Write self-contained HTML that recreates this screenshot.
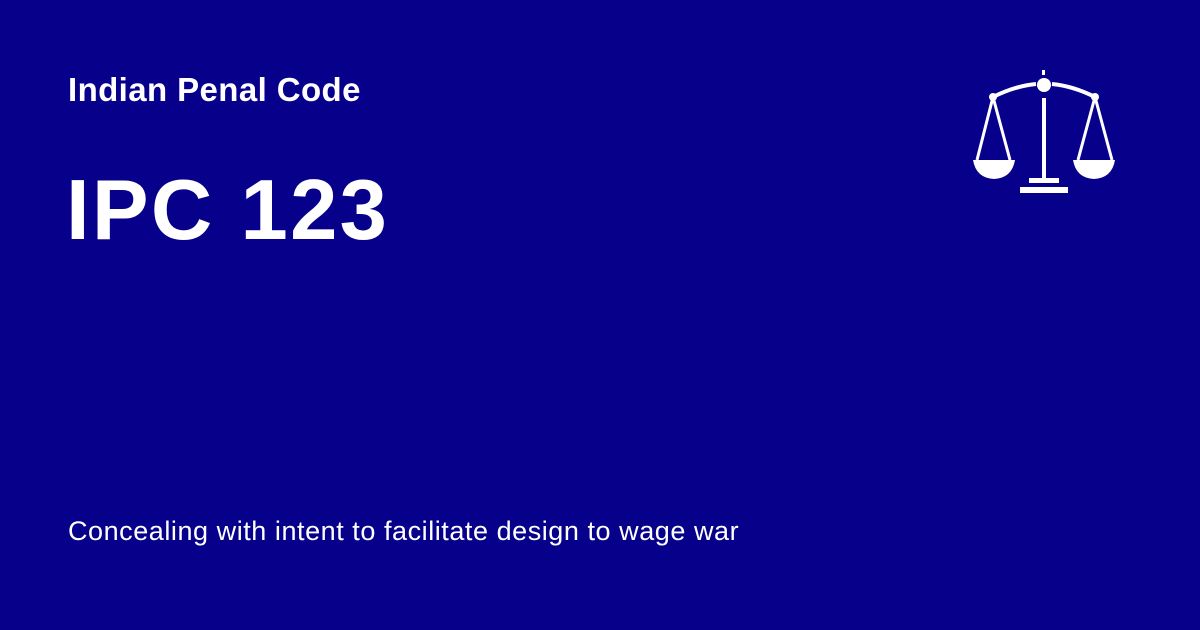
<!DOCTYPE html>
<html><head><style>
body{margin:0;width:1200px;height:630px;background:#07008a;overflow:hidden;font-family:"Liberation Sans",Arial,sans-serif;color:#fff;position:relative}
.t1{position:absolute;left:68px;top:70px;font-size:33px;font-weight:bold;line-height:40px;letter-spacing:0.4px}
.t2{position:absolute;left:66px;top:156px;font-size:85px;font-weight:bold;line-height:110px;letter-spacing:2.3px}
.t3{position:absolute;left:68px;top:514px;font-size:27px;line-height:34px;letter-spacing:0.55px}
svg{position:absolute;left:0;top:0}
</style></head><body>
<div class="t1">Indian Penal Code</div>
<div class="t2">IPC 123</div>
<div class="t3">Concealing with intent to facilitate design to wage war</div>
<svg width="1200" height="630">
<g fill="#fff" stroke="#fff">
<rect x="1042" y="70" width="3" height="5" stroke="none"/>
<path d="M993 97 Q1015 86 1036 84 M1052 84 Q1073 86 1095 97" fill="none" stroke-width="4"/>
<circle cx="1044" cy="85" r="7" stroke="none"/>
<circle cx="993" cy="97" r="4" stroke="none"/>
<circle cx="1095" cy="97" r="4" stroke="none"/>
<rect x="1042" y="98" width="4" height="80" stroke="none"/>
<path d="M993 97 L977 160 M993 97 L1010 160 M1095 97 L1078 160 M1095 97 L1112 160" stroke-width="3" fill="none"/>
<path d="M973 160 H1015 Q1012 178 994 179 Q976 178 973 160Z" stroke="none"/>
<path d="M1073 160 H1115 Q1112 178 1094 179 Q1076 178 1073 160Z" stroke="none"/>
<rect x="1029" y="178" width="30" height="5" stroke="none"/>
<rect x="1020" y="187" width="48" height="6" stroke="none"/>
</g>
</svg>
</body></html>
